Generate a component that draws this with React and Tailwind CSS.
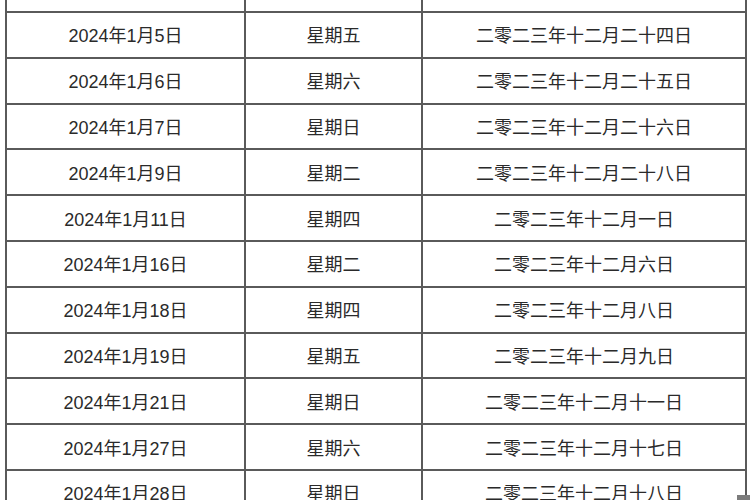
const ROWS = [
  ['2024年1月5日', '星期五', '二零二三年十二月二十四日'],
  ['2024年1月6日', '星期六', '二零二三年十二月二十五日'],
  ['2024年1月7日', '星期日', '二零二三年十二月二十六日'],
  ['2024年1月9日', '星期二', '二零二三年十二月二十八日'],
  ['2024年1月11日', '星期四', '二零二三年十二月一日'],
  ['2024年1月16日', '星期二', '二零二三年十二月六日'],
  ['2024年1月18日', '星期四', '二零二三年十二月八日'],
  ['2024年1月19日', '星期五', '二零二三年十二月九日'],
  ['2024年1月21日', '星期日', '二零二三年十二月十一日'],
  ['2024年1月27日', '星期六', '二零二三年十二月十七日'],
  ['2024年1月28日', '星期日', '二零二三年十二月十八日'],
];

function Row({ cells, className }) {
  return (
    <div className={`flex border-b-2 border-[#5a5a5a] ${className}`}>
      <div className="w-[239px] shrink-0 border-r-2 border-[#5a5a5a] flex items-center justify-center pt-[3px]">
        {cells[0]}
      </div>
      <div className="w-[177px] shrink-0 border-r-2 border-[#5a5a5a] flex items-center justify-center pt-[3px]">
        {cells[1]}
      </div>
      <div className="w-[322px] shrink-0 flex items-center justify-center pt-[3px]">
        {cells[2]}
      </div>
    </div>
  );
}

export default function App() {
  return (
    <div
      className="relative w-[750px] h-[500px] overflow-hidden bg-white text-[18px] leading-none text-[#2a2a2a]"
      style={{ fontFamily: '"Liberation Sans", "Noto Sans CJK SC", sans-serif' }}
    >
      <div className="ml-[5px] w-[742px] border-x-2 border-[#5a5a5a]">
        <Row cells={['', '', '']} className="h-[13px]" />
        {ROWS.map((r) => (
          <Row key={r[0]} cells={r} className="h-[45.8px]" />
        ))}
      </div>
      <div className="absolute right-0 bottom-0 w-[13px] h-[5px] bg-[#7c7c7c]" />
    </div>
  );
}
